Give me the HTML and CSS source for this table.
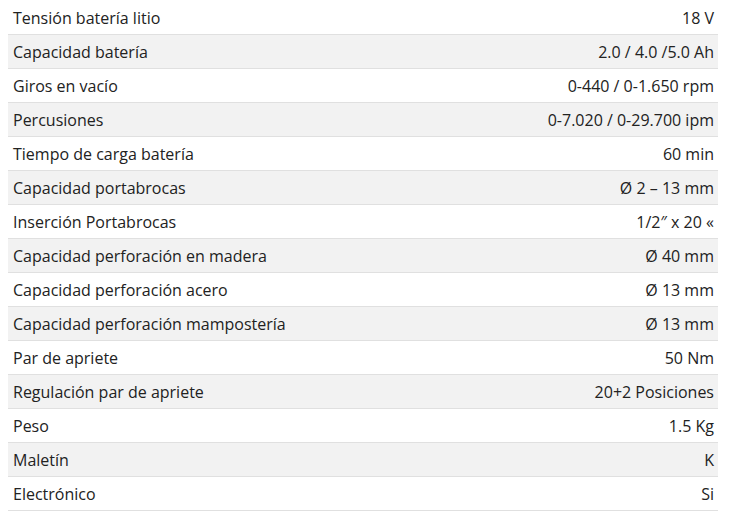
FILE: index.html
```html
<!DOCTYPE html>
<html lang="es">
<head>
<meta charset="utf-8">
<link rel="stylesheet" href="styles.css">
</head>
<body>
<table class="specs">
<tbody>
<tr><td>Tensión batería litio</td><td class="val">18 V</td></tr>
<tr><td>Capacidad batería</td><td class="val">2.0 / 4.0 /5.0 Ah</td></tr>
<tr><td>Giros en vacío</td><td class="val">0-440 / 0-1.650 rpm</td></tr>
<tr><td>Percusiones</td><td class="val">0-7.020 / 0-29.700 ipm</td></tr>
<tr><td>Tiempo de carga batería</td><td class="val">60 min</td></tr>
<tr><td>Capacidad portabrocas</td><td class="val">Ø 2 – 13 mm</td></tr>
<tr><td>Inserción Portabrocas</td><td class="val">1/2″ x 20 «</td></tr>
<tr><td>Capacidad perforación en madera</td><td class="val">Ø 40 mm</td></tr>
<tr><td>Capacidad perforación acero</td><td class="val">Ø 13 mm</td></tr>
<tr><td>Capacidad perforación mampostería</td><td class="val">Ø 13 mm</td></tr>
<tr><td>Par de apriete</td><td class="val">50 Nm</td></tr>
<tr><td>Regulación par de apriete</td><td class="val">20+2 Posiciones</td></tr>
<tr><td>Peso</td><td class="val">1.5 Kg</td></tr>
<tr><td>Maletín</td><td class="val">K</td></tr>
<tr><td>Electrónico</td><td class="val">Si</td></tr>
</tbody>
</table>
</body>
</html>
```
FILE: styles.css
```css
html, body {
  margin: 0;
  padding: 0;
  background: #fff;
}
body {
  padding: 1px 0 0 8px;
  font-family: "Open Sans", Lato, sans-serif;
  font-size: 16px;
  color: #222;
}
.specs {
  width: 710px;
  border-collapse: collapse;
}
.specs td {
  height: 33px;
  padding: 0 4px 0 5px;
  border-bottom: 1px solid #e0e0e0;
  vertical-align: middle;
  line-height: 20px;
}
.specs tr:nth-child(even) td {
  background: #f2f2f2;
}
.specs .val {
  text-align: right;
}
```
